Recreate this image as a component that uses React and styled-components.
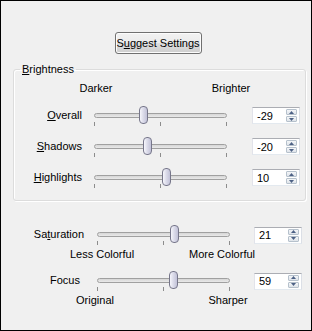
import React from 'react';
import styled, { createGlobalStyle } from 'styled-components';

const Global = createGlobalStyle`
  html, body { margin: 0; padding: 0; background: #f0f0f0; }
  body { font-family: "Liberation Sans", Arial, sans-serif; font-size: 11px; color: #000; }
`;

const Window = styled.div`
  box-sizing: border-box;
  width: 312px;
  height: 331px;
  border: 1px solid #000;
  background: #f0f0f0;
  display: flex;
  flex-direction: column;
`;

const ButtonRow = styled.div`
  display: flex;
  justify-content: center;
  margin-top: 31px;
`;

const PushButton = styled.button`
  box-sizing: border-box;
  width: 87px;
  height: 22px;
  margin-left: 4px;
  padding: 0;
  font: inherit;
  color: #000;
  white-space: nowrap;
  border: 1px solid #707070;
  border-radius: 3px;
  background: linear-gradient(#f2f2f2 0%, #ebebeb 50%, #dddddd 51%, #cfcfcf 100%);
  box-shadow: inset 0 0 0 1px #fcfcfc;
`;

const Group = styled.fieldset`
  box-sizing: border-box;
  margin: 8px 5px 0 12px;
  padding: 0;
  height: 139px;
  border: 1px solid #dcdcdc;
  border-radius: 3px;
  box-shadow: inset 1px 1px 0 #fff, 1px 1px 0 #fff;
  min-width: 0;
`;

const Legend = styled.legend`
  margin-left: 6px;
  padding: 0 2px;
  line-height: 14px;
`;

const CaptionRow = styled.div`
  display: flex;
  gap: ${p => p.$gap}px;
  padding-left: ${p => p.$start}px;
  height: ${p => p.$h}px;
  align-items: center;
`;

const Caption = styled.span`
  width: 70px;
  text-align: center;
  white-space: nowrap;
`;

const Row = styled.div`
  display: flex;
  align-items: center;
  height: ${p => p.$h}px;
`;

const Label = styled.label`
  width: ${p => p.$w}px;
  padding-right: ${p => p.$pr || 0}px;
  padding-bottom: 2px;
  text-align: right;
  white-space: nowrap;
  box-sizing: border-box;
`;

const SliderBox = styled.div`
  position: relative;
  width: 143px;
  height: 22px;
  margin-left: ${p => p.$ml}px;
`;

const Track = styled.div`
  position: absolute;
  left: 5px;
  right: 5px;
  top: 8px;
  height: 3px;
  border: 1px solid #a0a0a0;
  border-radius: 3px;
  background: linear-gradient(#d6d6d6, #e9e9e9);
`;

const Thumb = styled.div`
  position: absolute;
  top: 1px;
  width: 9px;
  height: 18px;
  box-sizing: border-box;
  border: 1px solid #76768a;
  border-radius: 4px;
  background: linear-gradient(90deg, #f6f6fc 0%, #dcdcea 45%, #c2c2d8 100%);
`;

const Tick = styled.div`
  position: absolute;
  top: 17px;
  width: 1px;
  height: 4px;
  background: #8c8c8c;
`;

const Spin = styled.div`
  box-sizing: border-box;
  display: flex;
  align-items: center;
  width: 48px;
  height: 17px;
  margin-left: ${p => p.$ml}px;
  border: 1px solid #abadb3;
  border-color: #abadb3 #dbdfe6 #e3e9ef #e2e3ea;
  background: #fff;
  padding-left: 4px;
`;

const SpinValue = styled.span`
  flex: 1;
`;

const SpinArrows = styled.div`
  display: flex;
  flex-direction: column;
  gap: 1px;
  margin-right: 2px;
`;

const ArrowBtn = styled.div`
  box-sizing: border-box;
  width: 11px;
  height: 6px;
  border: 1px solid #b6c1cc;
  border-radius: 1px;
  background: linear-gradient(#f4f6f8, #dfe4ea);
  display: flex;
  align-items: center;
  justify-content: center;
`;

const Spacer = styled.div`
  height: ${p => p.$h}px;
  flex: none;
`;

const Arrow = ({ up }) => (
  <svg width="5" height="3" viewBox="0 0 5 3">
    <path d={up ? 'M0 3 L2.5 0 L5 3 Z' : 'M0 0 L2.5 3 L5 0 Z'} fill="#4d6185" />
  </svg>
);

const SpinBox = ({ value, ml }) => (
  <Spin $ml={ml}>
    <SpinValue>{value}</SpinValue>
    <SpinArrows>
      <ArrowBtn><Arrow up /></ArrowBtn>
      <ArrowBtn><Arrow /></ArrowBtn>
    </SpinArrows>
  </Spin>
);

// thumb centre given as x offset inside the slider box
const Slider = ({ pos, ml }) => (
  <SliderBox $ml={ml}>
    <Track />
    <Tick style={{ left: 5 }} />
    <Tick style={{ left: 71 }} />
    <Tick style={{ left: 137 }} />
    <Thumb style={{ left: pos - 4 }} />
  </SliderBox>
);

const Acc = styled.span`
  text-decoration: underline;
`;

export default function App() {
  return (
    <>
      <Global />
      <Window>
        <ButtonRow>
          <PushButton>S<Acc>u</Acc>ggest Settings</PushButton>
        </ButtonRow>
        <Group>
          <Legend><Acc>B</Acc>rightness</Legend>
          <CaptionRow $start={47} $gap={65} $h={24}>
            <Caption>Darker</Caption>
            <Caption>Brighter</Caption>
          </CaptionRow>
          <Row $h={31}>
            <Label $w={68}><Acc>O</Acc>verall</Label>
            <Slider pos={54} ml={7} />
            <SpinBox value="-29" ml={20} />
          </Row>
          <Row $h={31}>
            <Label $w={68}><Acc>S</Acc>hadows</Label>
            <Slider pos={58} ml={7} />
            <SpinBox value="-20" ml={20} />
          </Row>
          <Row $h={31}>
            <Label $w={68}><Acc>H</Acc>ighlights</Label>
            <Slider pos={77} ml={7} />
            <SpinBox value="10" ml={20} />
          </Row>
        </Group>
        <Spacer $h={23} />
        <Row $h={22}>
          <Label $w={83}>Sa<Acc>t</Acc>uration</Label>
          <Slider pos={82} ml={8} />
          <SpinBox value="21" ml={19} />
        </Row>
        <CaptionRow $start={66} $gap={50} $h={16}>
          <Caption>Less Colorful</Caption>
          <Caption>More Colorful</Caption>
        </CaptionRow>
        <Spacer $h={8} />
        <Row $h={22}>
          <Label $w={83} $pr={4}>Focus</Label>
          <Slider pos={81} ml={8} />
          <SpinBox value="59" ml={19} />
        </Row>
        <CaptionRow $start={59} $gap={63} $h={16}>
          <Caption>Original</Caption>
          <Caption>Sharper</Caption>
        </CaptionRow>
      </Window>
    </>
  );
}
